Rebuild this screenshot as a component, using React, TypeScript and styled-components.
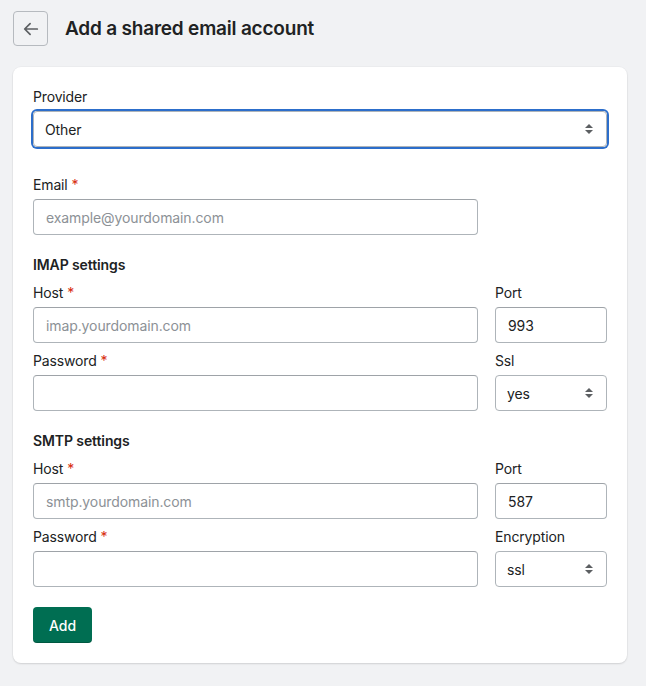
import React from 'react';
import styled, { createGlobalStyle } from 'styled-components';

const GlobalStyle = createGlobalStyle`
    * { box-sizing: border-box; }
    body {
        margin: 0;
        background: #f1f2f4;
        font-family: Inter, "Noto Sans", "Liberation Sans", sans-serif;
        color: #202223;
    }
`;

const Page = styled.div`
    padding: 11px 19px 23px 13px;
    background: #f1f2f4;
    min-height: 686px;
`;

const Header = styled.div`
    display: flex;
    align-items: center;
    gap: 17px;
    height: 35px;
`;

const BackButton = styled.button`
    display: flex;
    align-items: center;
    justify-content: center;
    width: 35px;
    height: 35px;
    padding: 0;
    background: transparent;
    border: 1px solid #b6babf;
    border-radius: 4px;
    color: #5c5f62;
`;

const Title = styled.h1`
    margin: 0;
    font-size: 19px;
    font-weight: 600;
    line-height: 28px;
    letter-spacing: -0.2px;
`;

const Card = styled.div`
    margin-top: 21px;
    background: #fff;
    border-radius: 8px;
    box-shadow: 0 1px 2px rgba(0, 0, 0, 0.12), 0 0 0 1px rgba(0, 0, 0, 0.02);
    padding: 20px 20px 20px;
    display: flex;
    flex-direction: column;
    gap: 8px;
`;

const Row = styled.div<{ $spaced?: boolean }>`
    display: grid;
    grid-template-columns: 1fr 112px;
    column-gap: 17px;
    margin-top: ${({ $spaced }) => ($spaced ? '20px' : '0')};
`;

const Field = styled.div`
    display: flex;
    flex-direction: column;
    gap: 4px;
`;

const Label = styled.label`
    font-size: 14px;
    line-height: 20px;
    letter-spacing: -0.15px;
    color: #202223;
`;

const Required = styled.span`
    color: #d72c0d;
    margin-left: 4px;
`;

const SectionTitle = styled.h2`
    margin: 12px 0 0;
    font-size: 14px;
    font-weight: 600;
    line-height: 20px;
    letter-spacing: -0.1px;
`;

const Input = styled.input`
    height: 36px;
    width: 100%;
    padding: 0 12px;
    border: 1px solid #aeb4b9;
    border-top-color: #9ea3a8;
    border-radius: 4px;
    font-family: inherit;
    font-size: 14px;
    letter-spacing: -0.1px;
    color: #202223;
    background: #fff;
    outline: none;

    &::placeholder {
        color: #8c9196;
    }
`;

const SelectWrap = styled.div<{ $focused?: boolean }>`
    position: relative;
    height: 36px;
    border-radius: 4px;
    box-shadow: ${({ $focused }) => ($focused ? '0 0 0 2px #2c6ecb' : 'none')};
`;

const Select = styled.select`
    appearance: none;
    width: 100%;
    height: 36px;
    padding: 0 32px 0 11px;
    border: 1px solid #aeb4b9;
    border-radius: 4px;
    font-family: inherit;
    font-size: 14px;
    letter-spacing: -0.1px;
    color: #202223;
    background: #fff;
    outline: none;
`;

const Arrows = styled.svg`
    position: absolute;
    right: 13px;
    top: 50%;
    transform: translateY(-50%);
    pointer-events: none;
`;

const AddButton = styled.button`
    align-self: flex-start;
    margin-top: 12px;
    height: 36px;
    padding: 0 16px;
    border: none;
    border-radius: 4px;
    background: #006e52;
    color: #fff;
    font-family: inherit;
    font-size: 14px;
    font-weight: 500;
    box-shadow: inset 0 -1px 0 rgba(0, 0, 0, 0.2);
`;

const noop = () => undefined;

const Dropdown: React.FC<{ value: string; focused?: boolean }> = ({ value, focused }) => (
    <SelectWrap $focused={focused}>
        <Select value={value} onChange={noop}>
            <option value={value}>{value}</option>
        </Select>
        <Arrows width="10" height="12" viewBox="0 0 10 12">
            <path d="M5 1 L9 5 L1 5 Z" fill="#5c5f62" />
            <path d="M5 11 L9 7 L1 7 Z" fill="#5c5f62" />
        </Arrows>
    </SelectWrap>
);

const Asterisk = () => <Required>*</Required>;

const App: React.FC = () => (
    <>
        <GlobalStyle />
        <Page>
            <Header>
                <BackButton aria-label="Back">
                    <svg width="18" height="18" viewBox="0 0 20 20" fill="none">
                        <path d="M17 10H3.5M9 4L3 10l6 6" stroke="#5c5f62" strokeWidth="1.9" strokeLinecap="round" strokeLinejoin="round" />
                    </svg>
                </BackButton>
                <Title>Add a shared email account</Title>
            </Header>
            <Card>
                <Field>
                    <Label>Provider</Label>
                    <Dropdown value="Other" focused />
                </Field>

                <Row $spaced>
                    <Field>
                        <Label>Email<Asterisk /></Label>
                        <Input placeholder="example@yourdomain.com" />
                    </Field>
                </Row>

                <SectionTitle>IMAP settings</SectionTitle>
                <Row>
                    <Field>
                        <Label>Host<Asterisk /></Label>
                        <Input placeholder="imap.yourdomain.com" />
                    </Field>
                    <Field>
                        <Label>Port</Label>
                        <Input defaultValue="993" />
                    </Field>
                </Row>
                <Row>
                    <Field>
                        <Label>Password<Asterisk /></Label>
                        <Input type="password" />
                    </Field>
                    <Field>
                        <Label>Ssl</Label>
                        <Dropdown value="yes" />
                    </Field>
                </Row>

                <SectionTitle>SMTP settings</SectionTitle>
                <Row>
                    <Field>
                        <Label>Host<Asterisk /></Label>
                        <Input placeholder="smtp.yourdomain.com" />
                    </Field>
                    <Field>
                        <Label>Port</Label>
                        <Input defaultValue="587" />
                    </Field>
                </Row>
                <Row>
                    <Field>
                        <Label>Password<Asterisk /></Label>
                        <Input type="password" />
                    </Field>
                    <Field>
                        <Label>Encryption</Label>
                        <Dropdown value="ssl" />
                    </Field>
                </Row>

                <AddButton>Add</AddButton>
            </Card>
        </Page>
    </>
);

export default App;
